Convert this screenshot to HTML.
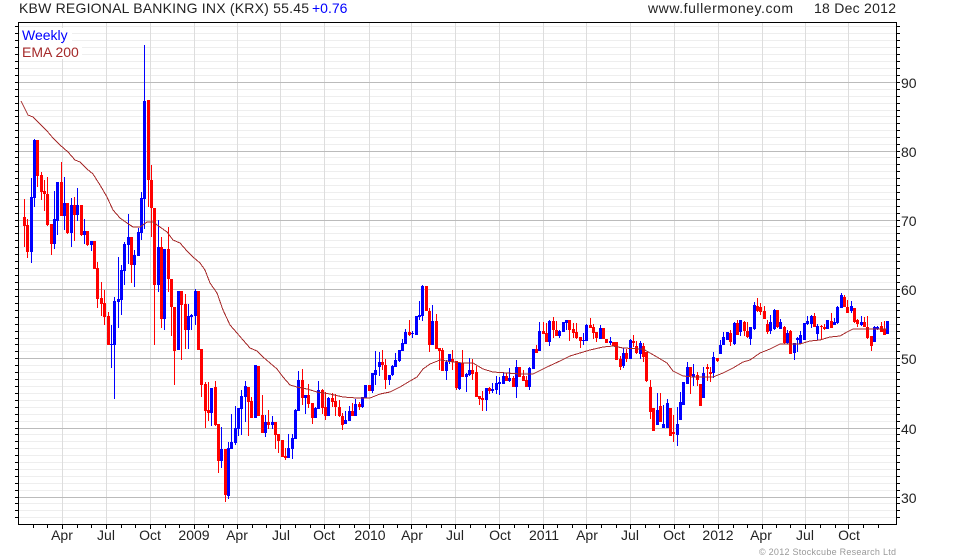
<!DOCTYPE html>
<html><head><meta charset="utf-8"><style>
html,body{margin:0;padding:0;background:#fff}
svg{display:block}
text{font-family:"Liberation Sans",Arial,sans-serif;font-size:14px;fill:#222}
</style></head><body>
<svg xmlns="http://www.w3.org/2000/svg" width="980" height="560" viewBox="0 0 980 560">
<rect width="980" height="560" fill="#fff"/>
<g shape-rendering="crispEdges">
<path fill="none" stroke="#eeeeee" stroke-width="1" d="M19 517.5H896M19 510.5H896M19 503.5H896M19 490.5H896M19 483.5H896M19 476.5H896M19 469.5H896M19 462.5H896M19 455.5H896M19 448.5H896M19 441.5H896M19 434.5H896M19 421.5H896M19 414.5H896M19 407.5H896M19 400.5H896M19 393.5H896M19 386.5H896M19 379.5H896M19 372.5H896M19 365.5H896M19 351.5H896M19 344.5H896M19 338.5H896M19 331.5H896M19 324.5H896M19 317.5H896M19 310.5H896M19 303.5H896M19 296.5H896M19 282.5H896M19 275.5H896M19 268.5H896M19 261.5H896M19 254.5H896M19 247.5H896M19 240.5H896M19 233.5H896M19 226.5H896M19 213.5H896M19 206.5H896M19 199.5H896M19 192.5H896M19 185.5H896M19 178.5H896M19 171.5H896M19 164.5H896M19 157.5H896M19 144.5H896M19 137.5H896M19 130.5H896M19 123.5H896M19 116.5H896M19 110.5H896M19 103.5H896M19 96.5H896M19 89.5H896M19 75.5H896M19 68.5H896M19 61.5H896M19 54.5H896M19 47.5H896M19 40.5H896M19 33.5H896M19 26.5H896"/>
<path fill="none" stroke="#dddddd" stroke-width="1" d="M62.5 23V524M106.5 23V524M150.5 23V524M194.5 23V524M237.5 23V524M280.5 23V524M324.5 23V524M369.5 23V524M411.5 23V524M455.5 23V524M499.5 23V524M543.5 23V524M586.5 23V524M630.5 23V524M674.5 23V524M718.5 23V524M762.5 23V524M805.5 23V524M848.5 23V524"/>
<path fill="none" stroke="#bbbbbb" stroke-width="1" d="M19 497.5H896M19 428.5H896M19 358.5H896M19 289.5H896M19 220.5H896M19 151.5H896M19 82.5H896"/>
<rect x="20" y="28" width="52" height="15" fill="#fff"/>
<rect x="20" y="44" width="62" height="15" fill="#fff"/>
<path fill="none" stroke="#000" stroke-width="1" d="M18.5 22.5H896.5V524.5H18.5Z"/>
<path fill="none" stroke="#000" stroke-width="1" d="M15 517.5h3M15 510.5h3M15 503.5h3M15 497.5h3M15 490.5h3M15 483.5h3M15 476.5h3M15 469.5h3M15 462.5h3M15 455.5h3M15 448.5h3M15 441.5h3M15 434.5h3M15 428.5h3M15 421.5h3M15 414.5h3M15 407.5h3M15 400.5h3M15 393.5h3M15 386.5h3M15 379.5h3M15 372.5h3M15 365.5h3M15 358.5h3M15 351.5h3M15 344.5h3M15 338.5h3M15 331.5h3M15 324.5h3M15 317.5h3M15 310.5h3M15 303.5h3M15 296.5h3M15 289.5h3M15 282.5h3M15 275.5h3M15 268.5h3M15 261.5h3M15 254.5h3M15 247.5h3M15 240.5h3M15 233.5h3M15 226.5h3M15 220.5h3M15 213.5h3M15 206.5h3M15 199.5h3M15 192.5h3M15 185.5h3M15 178.5h3M15 171.5h3M15 164.5h3M15 157.5h3M15 151.5h3M15 144.5h3M15 137.5h3M15 130.5h3M15 123.5h3M15 116.5h3M15 110.5h3M15 103.5h3M15 96.5h3M15 89.5h3M15 82.5h3M15 75.5h3M15 68.5h3M15 61.5h3M15 54.5h3M15 47.5h3M15 40.5h3M15 33.5h3M15 26.5h3"/>
<path fill="none" stroke="#000" stroke-width="1" d="M897 517.5h3M897 510.5h3M897 503.5h3M897 497.5h3M897 490.5h3M897 483.5h3M897 476.5h3M897 469.5h3M897 462.5h3M897 455.5h3M897 448.5h3M897 441.5h3M897 434.5h3M897 428.5h3M897 421.5h3M897 414.5h3M897 407.5h3M897 400.5h3M897 393.5h3M897 386.5h3M897 379.5h3M897 372.5h3M897 365.5h3M897 358.5h3M897 351.5h3M897 344.5h3M897 338.5h3M897 331.5h3M897 324.5h3M897 317.5h3M897 310.5h3M897 303.5h3M897 296.5h3M897 289.5h3M897 282.5h3M897 275.5h3M897 268.5h3M897 261.5h3M897 254.5h3M897 247.5h3M897 240.5h3M897 233.5h3M897 226.5h3M897 220.5h3M897 213.5h3M897 206.5h3M897 199.5h3M897 192.5h3M897 185.5h3M897 178.5h3M897 171.5h3M897 164.5h3M897 157.5h3M897 151.5h3M897 144.5h3M897 137.5h3M897 130.5h3M897 123.5h3M897 116.5h3M897 110.5h3M897 103.5h3M897 96.5h3M897 89.5h3M897 82.5h3M897 75.5h3M897 68.5h3M897 61.5h3M897 54.5h3M897 47.5h3M897 40.5h3M897 33.5h3M897 26.5h3"/>
<path fill="none" stroke="#000" stroke-width="1" d="M33.5 525v3M47.5 525v3M62.5 525v4M77.5 525v3M91.5 525v3M106.5 525v4M121.5 525v3M135.5 525v3M150.5 525v4M165.5 525v3M179.5 525v3M194.5 525v4M208.5 525v3M223.5 525v3M237.5 525v4M252.5 525v3M266.5 525v3M280.5 525v4M295.5 525v3M310.5 525v3M324.5 525v4M339.5 525v3M354.5 525v3M369.5 525v4M383.5 525v3M397.5 525v3M411.5 525v4M426.5 525v3M441.5 525v3M455.5 525v4M470.5 525v3M485.5 525v3M499.5 525v4M514.5 525v3M528.5 525v3M543.5 525v4M557.5 525v3M572.5 525v3M586.5 525v4M601.5 525v3M616.5 525v3M630.5 525v4M645.5 525v3M659.5 525v3M674.5 525v4M689.5 525v3M703.5 525v3M718.5 525v4M733.5 525v3M747.5 525v3M762.5 525v4M776.5 525v3M790.5 525v3M805.5 525v4M820.5 525v3M835.5 525v3M848.5 525v4M863.5 525v3M878.5 525v3"/>
<!-- red wicks -->
<path fill="none" stroke="#ff0000" stroke-width="1" d="M24.5 199V247M27.5 219V258M37.5 140V187M41.5 172V200M44.5 180V211M47.5 177V226M51.5 224V255M61.5 162V216M67.5 203V234M74.5 197V241M81.5 205V236M87.5 231V246M94.5 241V269M97.5 262V308M101.5 282V316M104.5 290V325M108.5 312V345M131.5 237V283M148.5 100V207M151.5 165V237M154.5 208V345M161.5 237V328M168.5 227V292M171.5 279V336M174.5 307V385M181.5 291V360M185.5 294V349M198.5 291V350M201.5 349V397M205.5 382V428M208.5 382V421M215.5 381V426M218.5 424V473M225.5 449V502M248.5 387V436M251.5 397V418M258.5 366V416M262.5 395V433M268.5 410V429M275.5 422V449M278.5 434V453M282.5 440V457M285.5 448V460M302.5 369V405M308.5 384V408M312.5 403V424M322.5 389V414M325.5 392V420M332.5 393V407M335.5 394V416M339.5 400V417M342.5 413V430M352.5 403V416M359.5 402V410M369.5 385V391M382.5 350V370M385.5 359V389M409.5 320V336M426.5 286V311M429.5 308V352M436.5 314V349M439.5 348V370M442.5 348V371M452.5 350V370M456.5 361V390M462.5 350V377M472.5 359V380M476.5 366V397M479.5 396V405M482.5 391V411M489.5 387V394M506.5 373V381M513.5 376V387M519.5 367V377M523.5 370V381M526.5 376V387M536.5 345V353M543.5 322V334M546.5 323V342M553.5 317V338M556.5 321V336M569.5 320V341M573.5 323V338M576.5 323V339M580.5 337V348M590.5 318V328M593.5 324V339M596.5 332V342M603.5 328V339M606.5 339V343M613.5 342V346M616.5 342V360M620.5 356V370M626.5 349V362M633.5 335V347M636.5 341V354M643.5 343V362M646.5 352V382M650.5 380V419M653.5 408V431M660.5 393V422M670.5 408V436M673.5 415V442M690.5 367V394M697.5 372V386M700.5 384V406M707.5 364V381M710.5 367V382M717.5 358V362M730.5 330V346M737.5 320V335M744.5 321V336M747.5 322V338M757.5 298V312M760.5 303V315M764.5 306V319M767.5 320V334M777.5 310V328M784.5 326V344M790.5 330V354M814.5 313V327M821.5 325V340M824.5 324V330M831.5 313V328M844.5 295V307M847.5 300V313M854.5 308V323M857.5 319V327M864.5 317V327M867.5 316V339M871.5 336V351M881.5 322V332M884.5 321V335"/>
<!-- red bodies -->
<path fill="none" stroke="#ff0000" stroke-width="3" d="M24.5 217V226M27.5 225V252M37.5 140V176M41.5 175V192M44.5 191V194M47.5 194V225M51.5 224V244M61.5 182V216M67.5 203V233M74.5 205V215M81.5 205V235M87.5 231V245M94.5 241V269M97.5 268V299M101.5 298V304M104.5 303V317M108.5 316V345M131.5 237V265M148.5 100V180M151.5 180V208M154.5 208V285M161.5 247V319M168.5 249V279M171.5 279V307M174.5 307V351M181.5 291V305M185.5 304V330M198.5 291V350M201.5 349V385M205.5 384V411M208.5 410V413M215.5 387V425M218.5 424V461M225.5 449V495M248.5 387V402M251.5 401V418M258.5 366V416M262.5 415V433M268.5 422V425M275.5 422V435M278.5 434V441M282.5 440V457M285.5 456V458M302.5 380V398M308.5 395V404M312.5 403V418M322.5 390V408M325.5 407V416M332.5 398V402M335.5 401V407M339.5 407V416M342.5 416V425M352.5 411V416M359.5 404V407M369.5 385V391M382.5 362V365M385.5 365V380M409.5 332V335M426.5 286V311M429.5 311V345M436.5 321V349M439.5 348V351M442.5 350V371M452.5 359V362M456.5 361V388M462.5 363V377M472.5 370V374M476.5 372V397M479.5 396V399M482.5 398V400M489.5 388V391M506.5 376V381M513.5 378V387M519.5 367V377M523.5 376V381M526.5 380V387M536.5 349V353M543.5 331V334M546.5 333V342M553.5 321V330M556.5 330V336M569.5 320V330M573.5 329V333M576.5 332V338M580.5 337V341M590.5 325V328M593.5 327V333M596.5 332V338M603.5 328V339M606.5 339V343M613.5 342V346M616.5 342V360M620.5 359V367M626.5 353V359M633.5 341V343M636.5 346V353M643.5 346V357M646.5 352V381M650.5 387V412M653.5 408V431M660.5 406V422M670.5 408V436M673.5 432V434M690.5 367V376M697.5 375V380M700.5 384V406M707.5 367V369M710.5 372V374M717.5 358V361M730.5 333V342M737.5 323V335M744.5 322V331M747.5 331V337M757.5 306V311M760.5 307V312M764.5 311V319M767.5 324V332M777.5 310V327M784.5 327V343M790.5 331V354M814.5 316V327M821.5 326V327M824.5 327V329M831.5 321V328M844.5 297V307M847.5 307V313M854.5 308V322M857.5 320V324M864.5 322V327M867.5 327V338M871.5 336V346M881.5 326V332M884.5 329V335"/>
<!-- blue wicks -->
<path fill="none" stroke="#0000ff" stroke-width="1" d="M31.5 178V263M34.5 139V207M54.5 191V249M57.5 182V235M64.5 177V230M71.5 198V247M77.5 188V221M84.5 219V244M91.5 241V251M111.5 325V368M114.5 297V399M118.5 257V328M121.5 265V315M124.5 242V285M128.5 214V264M134.5 250V287M138.5 228V256M141.5 192V240M144.5 45V229M158.5 220V292M164.5 249V330M178.5 291V350M188.5 304V349M191.5 314V330M195.5 289V325M211.5 388V426M221.5 427V468M228.5 442V499M231.5 414V449M235.5 406V445M238.5 408V436M241.5 390V435M245.5 381V422M255.5 365V418M265.5 415V437M272.5 416V429M288.5 434V458M292.5 434V459M295.5 409V439M298.5 371V411M305.5 395V414M315.5 407V418M318.5 381V409M328.5 397V416M345.5 411V424M349.5 406V421M355.5 399V416M362.5 397V408M365.5 385V398M372.5 373V393M375.5 351V385M379.5 352V376M389.5 375V385M392.5 365V376M395.5 353V367M399.5 350V362M402.5 339V351M405.5 329V344M412.5 331V338M416.5 316V335M419.5 301V320M422.5 285V321M432.5 305V345M446.5 360V380M449.5 354V364M459.5 362V390M466.5 373V392M469.5 358V376M486.5 388V411M492.5 383V393M496.5 376V394M499.5 377V395M503.5 372V384M509.5 368V382M516.5 360V398M529.5 367V390M533.5 349V369M539.5 322V351M549.5 320V346M559.5 330V338M563.5 322V332M566.5 320V330M583.5 333V345M586.5 324V341M600.5 325V339M610.5 337V345M623.5 348V368M630.5 339V359M640.5 341V359M657.5 393V425M663.5 405V428M667.5 399V428M677.5 407V446M680.5 392V420M683.5 382V405M687.5 362V384M693.5 364V386M703.5 367V398M713.5 352V378M720.5 340V354M723.5 332V345M727.5 332V340M734.5 322V345M740.5 320V336M750.5 327V345M754.5 302V330M770.5 315V334M774.5 309V330M780.5 319V329M787.5 330V344M794.5 343V360M797.5 337V352M800.5 331V344M804.5 323V340M807.5 316V325M811.5 315V328M817.5 324V340M827.5 320V329M834.5 318V325M837.5 306V324M841.5 293V308M851.5 301V313M861.5 316V326M874.5 326V342M877.5 326V330M887.5 321V334"/>
<!-- blue bodies -->
<path fill="none" stroke="#0000ff" stroke-width="3" d="M31.5 197V252M34.5 140V198M54.5 219V244M57.5 182V221M64.5 203V216M71.5 205V233M77.5 205V215M84.5 231V235M91.5 241V245M111.5 344V345M114.5 301V345M118.5 299V302M121.5 270V300M124.5 244V271M128.5 237V245M134.5 255V265M138.5 232V256M141.5 198V233M144.5 101V199M158.5 247V285M164.5 249V319M178.5 291V350M188.5 316V330M191.5 315V317M195.5 291V316M211.5 388V413M221.5 449V461M228.5 448V496M231.5 442V449M235.5 428V443M238.5 408V429M241.5 396V409M245.5 386V397M255.5 365V418M265.5 422V433M272.5 422V425M288.5 448V458M292.5 438V449M295.5 410V439M298.5 380V411M305.5 395V398M315.5 408V418M318.5 390V409M328.5 398V416M345.5 420V424M349.5 411V421M355.5 404V416M362.5 397V407M365.5 385V398M372.5 373V391M375.5 370V375M379.5 362V367M389.5 375V380M392.5 366V375M395.5 360V367M399.5 350V361M402.5 343V351M405.5 332V344M412.5 333V334M416.5 316V335M419.5 315V317M422.5 286V316M432.5 321V345M446.5 362V371M449.5 354V362M459.5 363V389M466.5 374V377M469.5 370V375M486.5 388V400M492.5 389V391M496.5 383V390M499.5 382V384M503.5 376V384M509.5 378V381M516.5 367V387M529.5 368V387M533.5 349V369M539.5 331V351M549.5 321V342M559.5 331V336M563.5 322V332M566.5 320V323M583.5 340V341M586.5 325V341M600.5 328V339M610.5 341V343M623.5 353V366M630.5 340V359M640.5 343V354M657.5 410V425M663.5 424V428M667.5 403V428M677.5 424V435M680.5 402V420M683.5 382V405M687.5 367V384M693.5 374V377M703.5 373V398M713.5 357V373M720.5 345V354M723.5 337V345M727.5 332V340M734.5 323V344M740.5 320V332M750.5 327V339M754.5 305V329M770.5 322V331M774.5 310V329M780.5 322V329M787.5 333V343M794.5 343V353M797.5 338V340M800.5 335V344M804.5 323V340M807.5 321V324M811.5 316V324M817.5 326V334M827.5 320V329M834.5 322V325M837.5 307V323M841.5 295V308M851.5 306V311M861.5 322V325M874.5 327V342M877.5 327V329M887.5 321V334"/>
<polyline fill="none" stroke="#a52a2a" stroke-width="1" points="21,101 28,115 33,117 40,124 47,131 53,138 60,145 68,152 75,160 80,162 87,169 93,174 100,185 107,197 113,210 120,218 127,223 133,227 140,227 147,222 153,222 160,227 167,232 173,240 180,243 187,251 193,257 200,263 205,270 210,283 217,293 223,310 230,325 237,333 243,340 250,348 257,351 263,357 270,363 277,369 283,377 290,385 297,387 307,389 317,392 330,394 343,397 357,398 370,398 380,394 390,392 400,387 410,381 417,377 423,369 430,364 440,360 453,362 463,363 473,363 483,369 493,372 507,373 520,374 533,374 547,367 560,361 570,356 580,353 590,350 603,347 613,346 623,348 643,349 650,353 657,357 667,363 673,371 683,376 693,377 713,377 723,373 733,368 743,362 750,360 760,353 770,349 780,344 800,344 810,341 820,340 830,337 840,336 847,332 853,329 863,329 887,329"/>
</g>
<text x="19" y="13" textLength="290">KBW REGIONAL BANKING INX (KRX) 55.45</text>
<text x="312" y="13" style="fill:#0000ff">+0.76</text>
<text x="648" y="13" textLength="145">www.fullermoney.com</text>
<text x="814" y="13" textLength="82">18 Dec 2012</text>
<text x="22" y="40" style="fill:#0000ff">Weekly</text>
<text x="22" y="57" style="fill:#a52a2a">EMA 200</text>
<text x="901" y="88">90</text>
<text x="901" y="157">80</text>
<text x="901" y="226">70</text>
<text x="901" y="295">60</text>
<text x="901" y="364">50</text>
<text x="901" y="434">40</text>
<text x="901" y="503">30</text>
<g text-anchor="middle">
<text x="62" y="540">Apr</text><text x="106" y="540">Jul</text><text x="150" y="540">Oct</text><text x="194" y="540">2009</text><text x="237" y="540">Apr</text><text x="281" y="540">Jul</text><text x="324" y="540">Oct</text><text x="370" y="540">2010</text><text x="412" y="540">Apr</text><text x="455" y="540">Jul</text><text x="500" y="540">Oct</text><text x="544" y="540">2011</text><text x="587" y="540">Apr</text><text x="630" y="540">Jul</text><text x="674" y="540">Oct</text><text x="718" y="540">2012</text><text x="761" y="540">Apr</text><text x="805" y="540">Jul</text><text x="849" y="540">Oct</text>
</g>
<text x="759" y="555" textLength="137" style="font-size:9px;fill:#999999">© 2012 Stockcube Research Ltd</text>
</svg>
</body></html>
